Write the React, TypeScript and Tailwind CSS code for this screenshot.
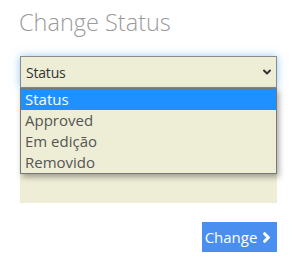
import React from 'react';
import { ChevronDown, ChevronRight } from 'lucide-react';

const OPTIONS = ['Status', 'Approved', 'Em edição', 'Removido'];

const App: React.FC = () => {
  return (
    <div className="w-[296px] h-[262px] bg-white font-['Segoe_UI','Open_Sans',sans-serif] overflow-hidden">
      <div className="ml-[20px] w-[257px]">
        {/* Title */}
        <h2 className="pt-[6px] text-[23.5px] leading-[32px] font-light text-[#9a9a9a] -ml-[1px]">Change Status</h2>

        {/* Select + textarea */}
        <div className="relative mt-[18px]">
          <div className="h-[32px] flex items-center justify-between pl-[5px] pr-[3px] border border-[#8a8a8a] bg-[#eeeed6] shadow-[0_0_8px_rgba(102,175,233,0.7)] text-[14px] text-[#333]">
            <span className="tracking-[-0.2px]">Status</span>
            <ChevronDown size={12} strokeWidth={4} className="text-[#333]" />
          </div>
          <div className="h-[115px] bg-[#eeeed6]" />

          {/* Open dropdown */}
          <div className="absolute top-[32px] left-0 right-0 border border-[#777] bg-[#eeeed6] shadow-[2px_3px_6px_rgba(0,0,0,0.35)] text-[15px]">
            {OPTIONS.map((opt, i) => (
              <div
                key={opt}
                className={`h-[21px] leading-[21px] pl-[4px] ${
                  i === 0 ? 'bg-[#1e90ff] text-white' : 'text-[#555]'
                }`}
              >
                {opt}
              </div>
            ))}
          </div>
        </div>

        {/* Button */}
        <div className="flex justify-end mt-[19px]">
          <button className="w-[75px] h-[30px] bg-[#4a8ef0] text-white text-[15px] flex items-center justify-center gap-[2px]">
            Change
            <ChevronRight size={15} strokeWidth={5} />
          </button>
        </div>
      </div>
    </div>
  );
};

export default App;
